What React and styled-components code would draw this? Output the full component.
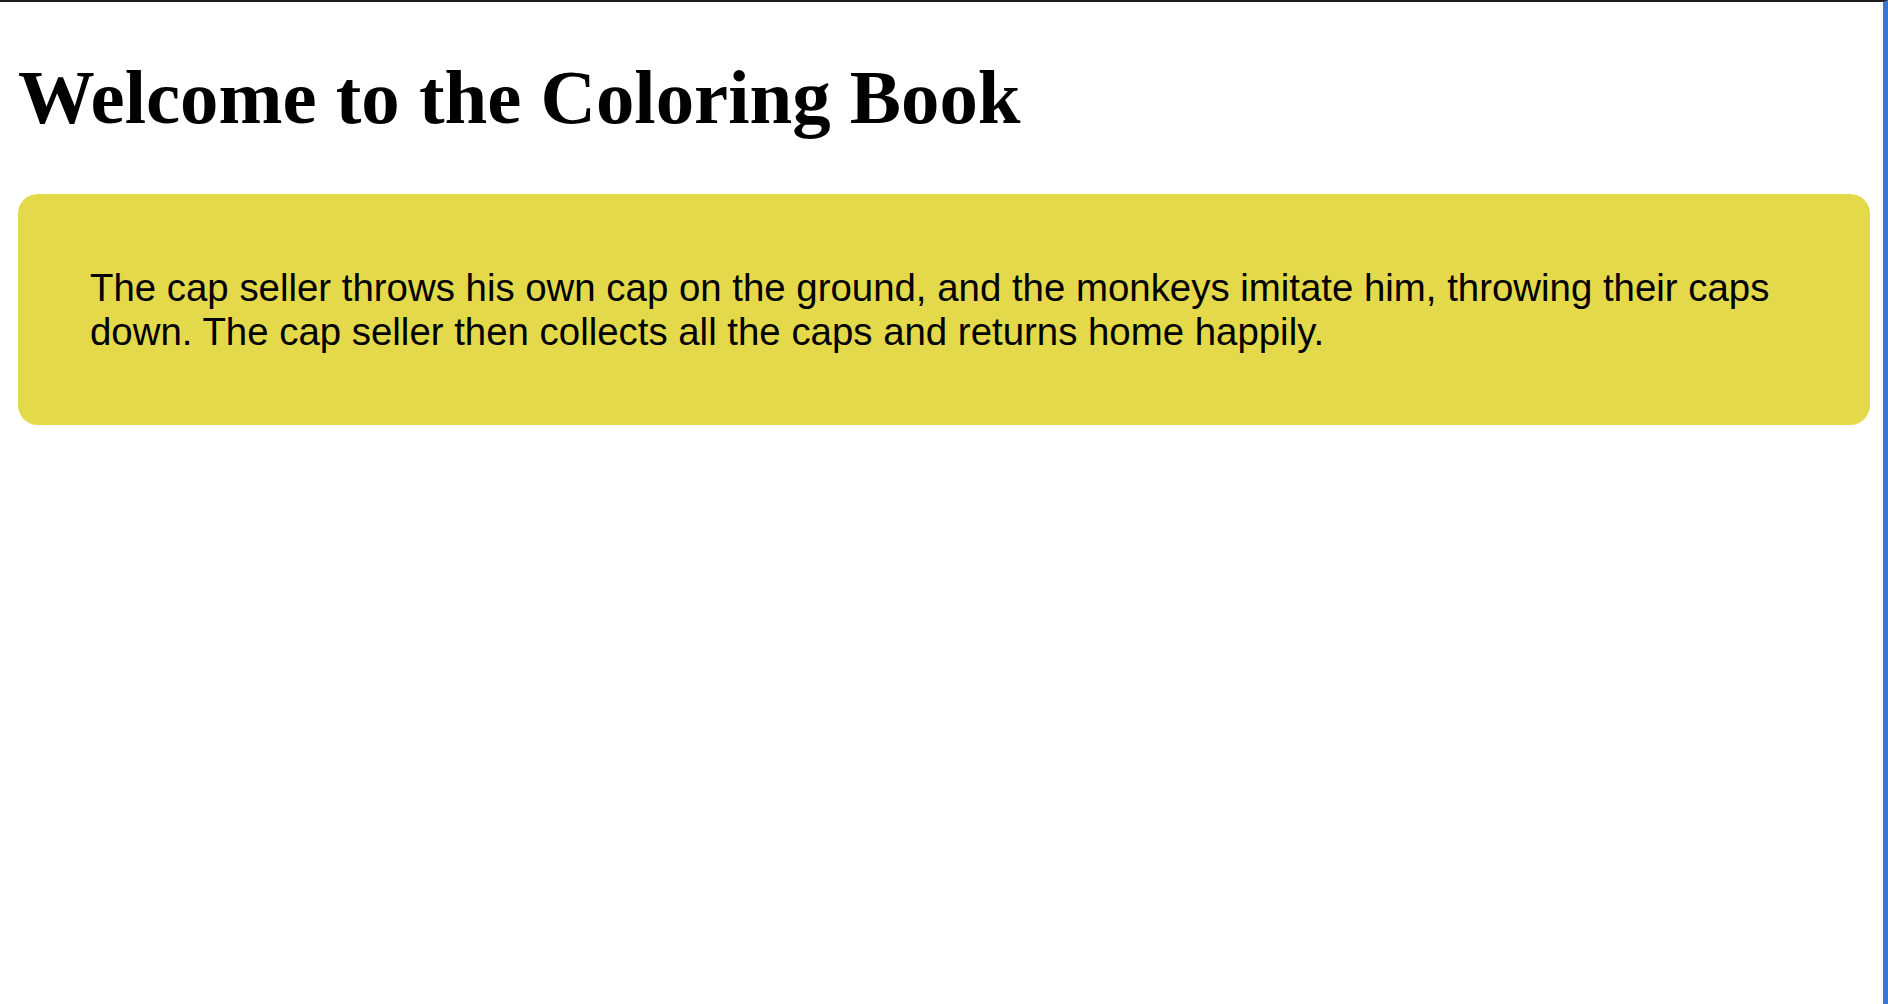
import React from 'react'
import styled, { createGlobalStyle } from 'styled-components'

const GlobalStyle = createGlobalStyle`
  html, body {
    margin: 0;
    padding: 0;
    background: #ffffff;
  }
`

const Frame = styled.div`
  box-sizing: border-box;
  min-height: 100vh;
  display: flex;
  flex-direction: column;
  padding: 0 13px 0 18px;
  border-top: 2px solid #1e1e1e;
  border-right: 5px solid #3677d3;
`

const Title = styled.h1`
  margin: 52px 0 0;
  font-family: "Liberation Serif", "Times New Roman", serif;
  font-weight: 700;
  font-size: 76.8px;
  line-height: normal;
  color: #000;
`

const StoryCard = styled.div`
  margin-top: 51.5px;
  padding: 34px 70px 33px 72px;
  background: #e3d94a;
  border-radius: 20px;
`

const StoryText = styled.p`
  margin: 38.4px 0;
  font-family: "Liberation Sans", Arial, sans-serif;
  font-size: 38.4px;
  line-height: normal;
  color: #000;
`

export default function App() {
  return (
    <>
      <GlobalStyle />
      <Frame>
        <Title>Welcome to the Coloring Book</Title>
        <StoryCard>
          <StoryText>
            The cap seller throws his own cap on the ground, and the monkeys imitate him,
            throwing their caps down. The cap seller then collects all the caps and returns
            home happily.
          </StoryText>
        </StoryCard>
      </Frame>
    </>
  )
}
